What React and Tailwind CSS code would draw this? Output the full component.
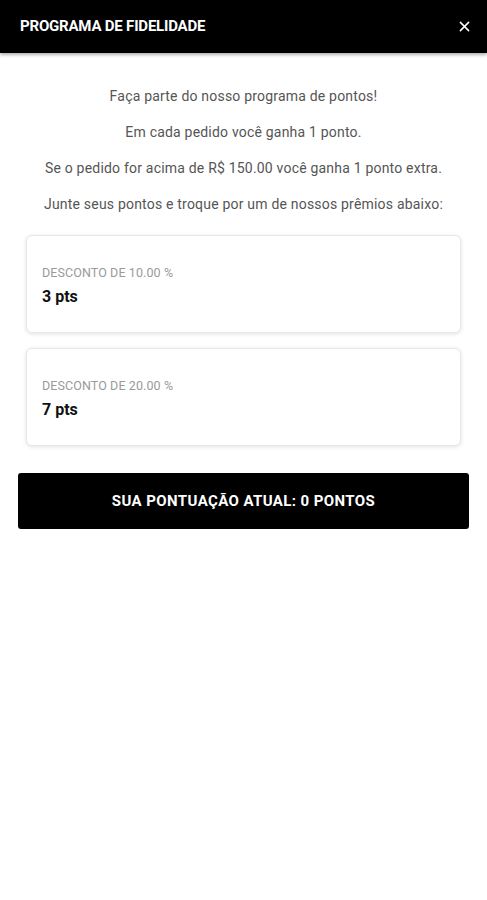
import React from "react";

const rewards = [
  { label: "DESCONTO DE 10.00 %", pts: "3 pts" },
  { label: "DESCONTO DE 20.00 %", pts: "7 pts" },
];

const rules = [
  "Faça parte do nosso programa de pontos!",
  "Em cada pedido você ganha 1 ponto.",
  "Se o pedido for acima de R$ 150.00 você ganha 1 ponto extra.",
  "Junte seus pontos e troque por um de nossos prêmios abaixo:",
];

export default function App() {
  return (
    <div className="min-h-[900px] w-full bg-white font-['Roboto',sans-serif]">
      <header className="flex h-[53px] items-center justify-between bg-black pl-[20px] pr-[13px] shadow-[0_2px_3px_rgba(0,0,0,0.3)]">
        <h1 className="text-[15px] font-bold tracking-[-0.2px] text-white">
          PROGRAMA DE FIDELIDADE
        </h1>
        <button className="flex h-[20px] w-[20px] items-center justify-center text-white">
          <svg width="11" height="11" viewBox="0 0 12 12" fill="none" stroke="currentColor" strokeWidth="1.6" strokeLinecap="round">
            <path d="M1.5 1.5l9 9M10.5 1.5l-9 9" />
          </svg>
        </button>
      </header>

      <div className="flex flex-col gap-[16px] pt-[33px] text-center text-[14px] leading-[20px] tracking-[0.2px] text-[#555]">
        {rules.map((line) => (
          <p key={line}>{line}</p>
        ))}
      </div>

      <div className="mt-[21px] flex flex-col gap-[15px] px-[26px]">
        {rewards.map((r) => (
          <div
            key={r.label}
            className="flex h-[98px] flex-col justify-center rounded-[6px] border border-[#e8e8e8] bg-white px-[15px] pt-[4px] shadow-[0_1px_4px_rgba(0,0,0,0.12)]"
          >
            <span className="text-[12.5px] leading-[16px] tracking-[0.1px] text-[#9a9a9a]">{r.label}</span>
            <span className="mt-[6px] text-[16px] font-bold leading-[20px] text-[#111]">{r.pts}</span>
          </div>
        ))}
      </div>

      <div className="mt-[27px] px-[18px]">
        <button className="flex h-[56px] w-full items-center justify-center rounded-[3px] bg-black text-[15px] font-bold tracking-[0.4px] text-white">
          SUA PONTUAÇÃO ATUAL: 0 PONTOS
        </button>
      </div>
    </div>
  );
}
